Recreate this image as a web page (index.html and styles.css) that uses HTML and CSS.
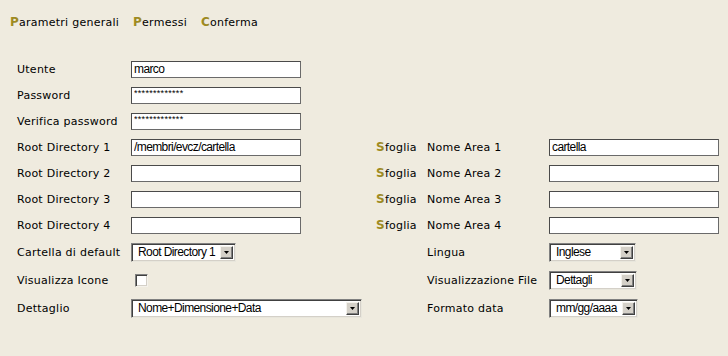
FILE: index.html
```html
<!DOCTYPE html>
<html lang="it">
<head>
<meta charset="utf-8">
<title>Parametri generali</title>
<link rel="stylesheet" href="styles.css">
</head>
<body>
<nav class="tabs">
  <span class="tab"><b class="key">P</b>arametri generali</span>
  <span class="tab"><b class="key">P</b>ermessi</span>
  <span class="tab"><b class="key">C</b>onferma</span>
</nav>
<form class="form">
  <label class="lbl">Utente</label>
  <div class="cell"><input class="field" type="text" value="marco"></div>
  <span></span><span></span><span></span>

  <label class="lbl">Password</label>
  <div class="cell"><input class="field pw" type="text" value="*************"></div>
  <span></span><span></span><span></span>

  <label class="lbl">Verifica password</label>
  <div class="cell"><input class="field pw" type="text" value="*************"></div>
  <span></span><span></span><span></span>

  <label class="lbl">Root Directory 1</label>
  <div class="cell"><input class="field" type="text" value="/membri/evcz/cartella"></div>
  <span class="browse"><b class="key">S</b>foglia</span>
  <label class="lbl">Nome Area 1</label>
  <div class="cell"><input class="field" type="text" value="cartella"></div>

  <label class="lbl">Root Directory 2</label>
  <div class="cell"><input class="field" type="text" value=""></div>
  <span class="browse"><b class="key">S</b>foglia</span>
  <label class="lbl">Nome Area 2</label>
  <div class="cell"><input class="field" type="text" value=""></div>

  <label class="lbl">Root Directory 3</label>
  <div class="cell"><input class="field" type="text" value=""></div>
  <span class="browse"><b class="key">S</b>foglia</span>
  <label class="lbl">Nome Area 3</label>
  <div class="cell"><input class="field" type="text" value=""></div>

  <label class="lbl">Root Directory 4</label>
  <div class="cell"><input class="field" type="text" value=""></div>
  <span class="browse"><b class="key">S</b>foglia</span>
  <label class="lbl">Nome Area 4</label>
  <div class="cell"><input class="field" type="text" value=""></div>

  <label class="lbl">Cartella di default</label>
  <div class="cell"><div class="select w-cartella"><span class="sel-text">Root Directory 1</span><span class="sel-btn"><svg width="5" height="3" viewBox="0 0 5 3"><path d="M0 0h5L2.5 3z" fill="#000"/></svg></span></div></div>
  <span></span>
  <label class="lbl">Lingua</label>
  <div class="cell"><div class="select w-lingua"><span class="sel-text">Inglese</span><span class="sel-btn"><svg width="5" height="3" viewBox="0 0 5 3"><path d="M0 0h5L2.5 3z" fill="#000"/></svg></span></div></div>

  <label class="lbl">Visualizza Icone</label>
  <div class="cell"><span class="check"></span></div>
  <span></span>
  <label class="lbl">Visualizzazione File</label>
  <div class="cell"><div class="select w-vis"><span class="sel-text">Dettagli</span><span class="sel-btn"><svg width="5" height="3" viewBox="0 0 5 3"><path d="M0 0h5L2.5 3z" fill="#000"/></svg></span></div></div>

  <label class="lbl">Dettaglio</label>
  <div class="cell"><div class="select w-dett"><span class="sel-text">Nome+Dimensione+Data</span><span class="sel-btn"><svg width="5" height="3" viewBox="0 0 5 3"><path d="M0 0h5L2.5 3z" fill="#000"/></svg></span></div></div>
  <span></span>
  <label class="lbl">Formato data</label>
  <div class="cell"><div class="select w-data"><span class="sel-text">mm/gg/aaaa</span><span class="sel-btn"><svg width="5" height="3" viewBox="0 0 5 3"><path d="M0 0h5L2.5 3z" fill="#000"/></svg></span></div></div>
</form>
</body>
</html>
```
FILE: styles.css
```css
html, body {
  margin: 0;
  padding: 0;
  background: #efebdf;
}
body {
  font-family: "DejaVu Sans", Verdana, sans-serif;
  font-size: 11px;
  letter-spacing: 0.25px;
  color: #000;
  width: 728px;
  height: 356px;
  overflow: hidden;
}
.tabs {
  display: flex;
  gap: 14px;
  height: 56px;
  box-sizing: border-box;
  padding: 15px 0 0 10px;
  line-height: 14px;
}
.key {
  color: #9e8a22;
  font-weight: bold;
  font-size: 12px;
}
.form {
  display: grid;
  grid-template-columns: 114px 245px 51px 122px 170px;
  grid-template-rows: repeat(7, 26px) 28px 28px 28px;
  padding-left: 17px;
  margin: 0;
  align-items: center;
}
.lbl {
  white-space: nowrap;
  line-height: 13px;
}
.browse {
  white-space: nowrap;
}
.cell {
  display: flex;
  align-items: center;
}
.field {
  box-sizing: border-box;
  width: 170px;
  height: 17px;
  margin: 0;
  padding: 0 1px 0 2px;
  border: 1px solid #6a6a6a;
  border-top-color: #4a4a4a;
  border-left-color: #4a4a4a;
  background: #fff;
  font-family: "Liberation Sans", Arial, sans-serif;
  font-size: 12px;
  letter-spacing: -0.6px;
  color: #000;
  outline: none;
}
.field.pw {
  font-size: 9px;
  padding-bottom: 5px;
  letter-spacing: 0.3px;
}
.select {
  box-sizing: border-box;
  display: flex;
  align-items: center;
  height: 19px;
  background: #fff;
  border: 1px solid;
  border-color: #808080 #e8e6dc #e8e6dc #808080;
  box-shadow: inset 1px 1px 0 #404040, inset -1px -1px 0 #d4d0c8;
  padding: 2px;
  font-family: "Liberation Sans", Arial, sans-serif;
  font-size: 12px;
  letter-spacing: -0.6px;
}
.sel-text {
  flex: 1;
  padding-left: 4px;
  white-space: nowrap;
  overflow: hidden;
  line-height: 14px;
}
.sel-btn {
  box-sizing: border-box;
  flex: none;
  width: 13px;
  height: 13px;
  display: flex;
  align-items: center;
  justify-content: center;
  background: #d4d0c8;
  border: 1px solid;
  border-color: #f4f2ec #404040 #404040 #f4f2ec;
  box-shadow: inset -1px -1px 0 #808080;
}
.w-cartella { width: 105px; }
.w-dett { width: 231px; }
.w-lingua { width: 87px; }
.w-vis { width: 88px; }
.w-data { width: 89px; }
.check {
  box-sizing: border-box;
  width: 13px;
  height: 13px;
  margin-left: 4px;
  background: #fff;
  border: 1px solid;
  border-color: #808080 #f4f2ec #f4f2ec #808080;
  box-shadow: inset 1px 1px 0 #404040, inset -1px -1px 0 #d4d0c8;
}
```
